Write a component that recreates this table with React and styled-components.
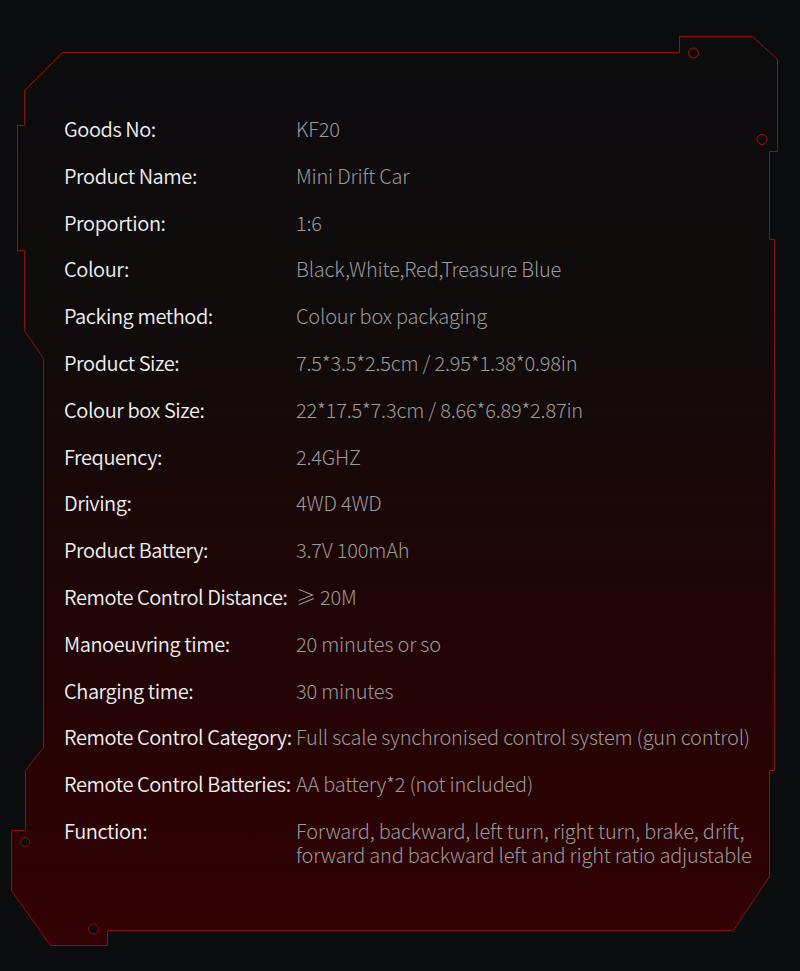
import React from "react";
import styled, { createGlobalStyle } from "styled-components";

const Global = createGlobalStyle`
  html, body { margin: 0; padding: 0; background: #0b0c0e; }
  body { font-family: "Noto Sans CJK SC", "Noto Sans", sans-serif; }
`;

const Page = styled.div`
  position: relative;
  width: 800px;
  height: 971px;
  background: #0b0c0e;
  overflow: hidden;
`;

const FrameArt = styled.svg`
  position: absolute;
  left: 0;
  top: 0;
  width: 800px;
  height: 971px;
  z-index: 0;
`;

const Specs = styled.dl`
  position: relative;
  z-index: 1;
  margin: 0;
  padding: 117px 0 0 64px;
  display: grid;
  grid-template-columns: 232px 1fr;
  row-gap: 22.8px;
  line-height: 24px;
  font-size: 20px;
`;

const Label = styled.dt`
  margin: 0;
  color: #f0f0f0;
  font-weight: 350;
  letter-spacing: -0.42px;
  white-space: nowrap;
`;

const Value = styled.dd`
  margin: 0;
  color: #9a9a9a;
  font-weight: 300;
  letter-spacing: -0.2px;
  white-space: nowrap;
`;

const rows = [
  ["Goods No:", "KF20"],
  ["Product Name:", "Mini Drift Car"],
  ["Proportion:", "1:6"],
  ["Colour:", "Black,White,Red,Treasure Blue"],
  ["Packing method:", "Colour box packaging"],
  ["Product Size:", "7.5*3.5*2.5cm / 2.95*1.38*0.98in"],
  ["Colour box Size:", "22*17.5*7.3cm / 8.66*6.89*2.87in"],
  ["Frequency:", "2.4GHZ"],
  ["Driving:", "4WD 4WD"],
  ["Product Battery:", "3.7V 100mAh"],
  ["Remote Control Distance:", "≥ 20M"],
  ["Manoeuvring time:", "20 minutes or so"],
  ["Charging time:", "30 minutes"],
  ["Remote Control Category:", "Full scale synchronised control system (gun control)"],
  ["Remote Control Batteries:", "AA battery*2 (not included)"],
  [
    "Function:",
    <>
      Forward, backward, left turn, right turn, brake, drift,
      <br />
      forward and backward left and right ratio adjustable
    </>,
  ],
];

const outline = [
  [62, 52], [679, 52], [679, 36], [752, 36], [777, 59], [777, 151],
  [769, 151], [769, 239], [774, 239], [774, 770], [769, 770], [769, 876],
  [733, 930], [107, 930], [107, 945], [50, 945], [11, 890], [11, 830],
  [25, 830], [25, 770], [43, 747], [43, 358], [24, 330], [24, 250],
  [17, 250], [17, 125], [24, 125], [24, 90],
]
  .map(([x, y]) => `${x + 0.5},${y + 0.5}`)
  .join(" ");

function Frame() {
  return (
    <FrameArt viewBox="0 0 800 971" aria-hidden="true">
      <defs>
        <linearGradient id="panelFill" x1="0" y1="36" x2="0" y2="945" gradientUnits="userSpaceOnUse">
          <stop offset="0" stopColor="#0c0c0e" />
          <stop offset="0.3" stopColor="#0f0b0b" />
          <stop offset="0.55" stopColor="#1c0606" />
          <stop offset="0.8" stopColor="#280304" />
          <stop offset="1" stopColor="#320104" />
        </linearGradient>
      </defs>
      <polygon points={outline} fill="url(#panelFill)" stroke="#8c1016" strokeWidth="1" />
      <circle cx="693.5" cy="53" r="5" fill="none" stroke="#a0141a" strokeWidth="1" />
      <circle cx="762" cy="139.5" r="5" fill="none" stroke="#a0141a" strokeWidth="1" />
      <circle cx="25" cy="842" r="4.5" fill="#0b0c0e" stroke="#8c1016" strokeWidth="1" />
      <circle cx="93.5" cy="929" r="5" fill="#0b0c0e" stroke="#8c1016" strokeWidth="1" />
    </FrameArt>
  );
}

export default function App() {
  return (
    <Page>
      <Global />
      <Frame />
      <Specs>
        {rows.map(([k, v], i) => (
          <React.Fragment key={i}>
            <Label>{k}</Label>
            <Value>{v}</Value>
          </React.Fragment>
        ))}
      </Specs>
    </Page>
  );
}
